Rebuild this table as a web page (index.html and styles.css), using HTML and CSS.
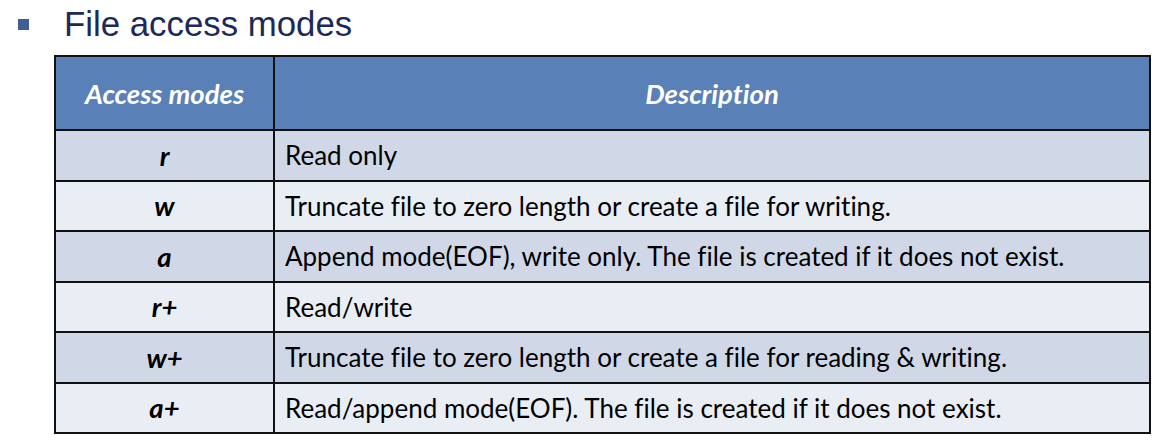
FILE: index.html
```html
<!DOCTYPE html>
<html>
<head>
<meta charset="utf-8">
<link rel="stylesheet" href="styles.css">
</head>
<body>
<div class="title">
  <span class="bullet"></span>
  <h1 class="title-text">File access modes</h1>
</div>
<table class="modes">
  <thead>
    <tr class="head-row"><th class="c1">Access modes</th><th class="c2">Description</th></tr>
  </thead>
  <tbody>
    <tr class="odd"><td class="mode">r</td><td class="desc">Read only</td></tr>
    <tr class="even"><td class="mode">w</td><td class="desc">Truncate file to zero length or create a file for writing.</td></tr>
    <tr class="odd"><td class="mode">a</td><td class="desc">Append mode(EOF), write only. The file is created if it does not exist.</td></tr>
    <tr class="even"><td class="mode">r+</td><td class="desc">Read/write</td></tr>
    <tr class="odd"><td class="mode">w+</td><td class="desc">Truncate file to zero length or create a file for reading &amp; writing.</td></tr>
    <tr class="even"><td class="mode">a+</td><td class="desc">Read/append mode(EOF). The file is created if it does not exist.</td></tr>
  </tbody>
</table>
</body>
</html>
```
FILE: styles.css
```css
html, body {
  margin: 0;
  padding: 0;
  background: #ffffff;
}
.title {
  display: flex;
  align-items: center;
  height: 48px;
  padding-left: 18px;
}
.bullet {
  width: 11px;
  height: 11px;
  background: #3f5f94;
  margin-right: 35px;
  margin-top: 0px;
}
.title-text {
  margin: 0;
  font-family: "Liberation Sans", Arial, sans-serif;
  font-weight: normal;
  font-size: 34.8px;
  color: #1c2a5a;
  line-height: 48px;
}
.modes {
  margin-left: 54px;
  margin-top: 7px;
  width: 1097px;
  border-collapse: collapse;
  font-family: Lato, "Open Sans", sans-serif;
  font-size: 26px;
  font-variant-ligatures: none;
  color: #000;
}
.modes th, .modes td {
  border: 2px solid #111;
  padding: 0;
}
.head-row th {
  height: 72px;
  background: #5980b7;
  color: #fff;
  font-style: italic;
  font-weight: bold;
  font-size: 27.5px;
  text-align: center;
}
.c1 { width: 217px; }
.odd td { background: #d0d8e8; }
.even td { background: #e9edf4; }
.modes td { height: 48.5px; }
.mode {
  text-align: center;
  font-style: italic;
  font-weight: bold;
  font-size: 27.5px;
}
.desc {
  padding-left: 10px !important;
}
```
